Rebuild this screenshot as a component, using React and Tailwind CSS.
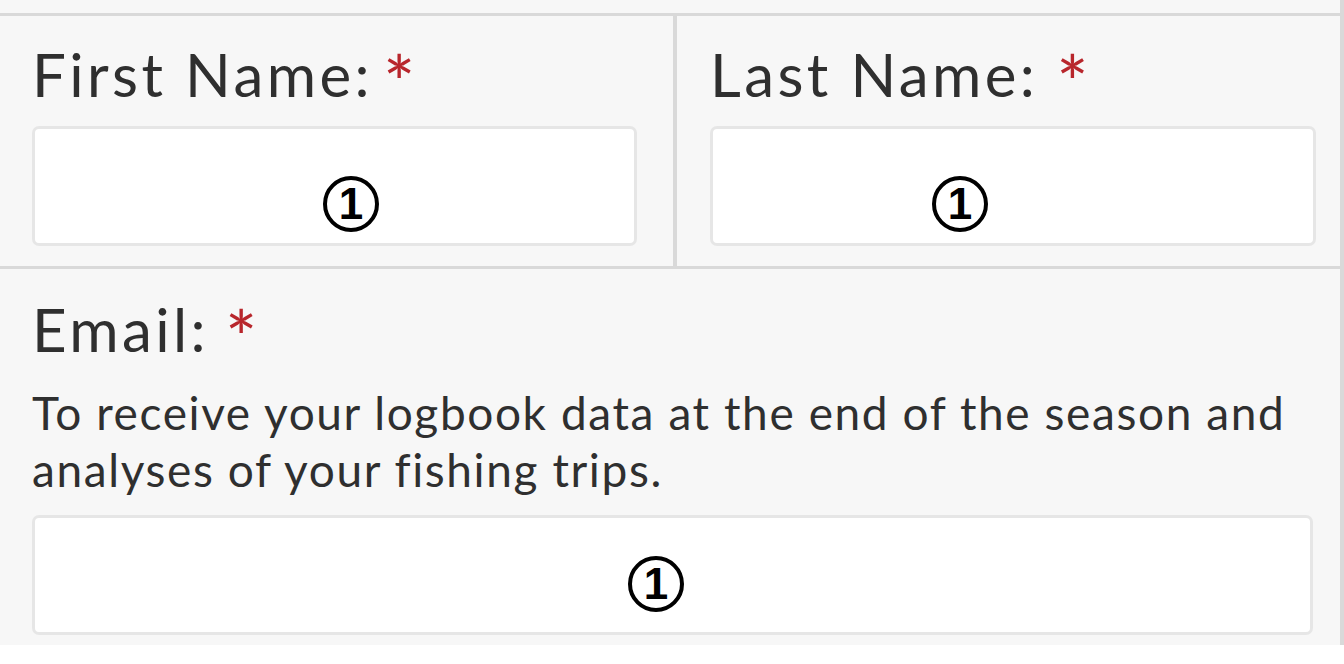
import React from "react";

function Marker() {
  return (
    <div className="w-[56px] h-[56px] rounded-full border-[4px] border-black flex items-center justify-center bg-white">
      <span className="text-[44px] leading-none font-bold text-black" style={{ fontFamily: '"Liberation Sans", Arial, sans-serif' }}>1</span>
    </div>
  );
}

function Field({ markerLeft, markerTop, className }) {
  return (
    <div className={"relative h-[120px] bg-white rounded-[7px] border-[3px] border-[#e6e6e6] " + className}>
      <div className="absolute" style={{ left: markerLeft, top: markerTop }}>
        <Marker />
      </div>
    </div>
  );
}

function Label({ children, gap }) {
  return (
    <div className="text-[60px] leading-[72px] text-[#2f2f2f] tracking-[3.4px] whitespace-nowrap">
      {children}
      <span className={"text-[76px] leading-[0] align-[-14px] text-[#b8262c] " + gap}>*</span>
    </div>
  );
}

export default function App() {
  return (
    <div className="w-[1344px] h-[664px] bg-white" style={{ fontFamily: 'Lato, "Open Sans", sans-serif' }}>
      <div className="w-[1344px] h-[645px] bg-[#f7f7f7] border-r-[4px] border-[#d9d9d9] flex flex-col">
        <div className="h-[13px] shrink-0"></div>
        <div className="flex border-t-[3px] border-b-[3px] border-[#d9d9d9] h-[256px] shrink-0">
          <div className="w-[677px] pl-[32px] pt-[22px] border-r-[4px] border-[#d9d9d9] shrink-0">
            <Label gap="ml-[10px]">First Name:</Label>
            <div className="h-[16px]"></div>
            <Field markerLeft={288} markerTop={47} className="w-[605px]" />
          </div>
          <div className="pl-[33px] pt-[22px]">
            <Label gap="ml-[18px]">Last Name:</Label>
            <div className="h-[16px]"></div>
            <Field markerLeft={219} markerTop={47} className="w-[606px]" />
          </div>
        </div>
        <div className="pl-[32px] pt-[24px]">
          <Label gap="ml-[16px]">Email:</Label>
          <div className="text-[46px] leading-[57px] tracking-[1.6px] text-[#2f2f2f] mt-[19px] w-[1300px]">
            To receive your logbook data at the end of the season and analyses of your fishing trips.
          </div>
          <div className="h-[17px]"></div>
          <Field markerLeft={593} markerTop={38} className="w-[1281px]" />
        </div>
      </div>
    </div>
  );
}
